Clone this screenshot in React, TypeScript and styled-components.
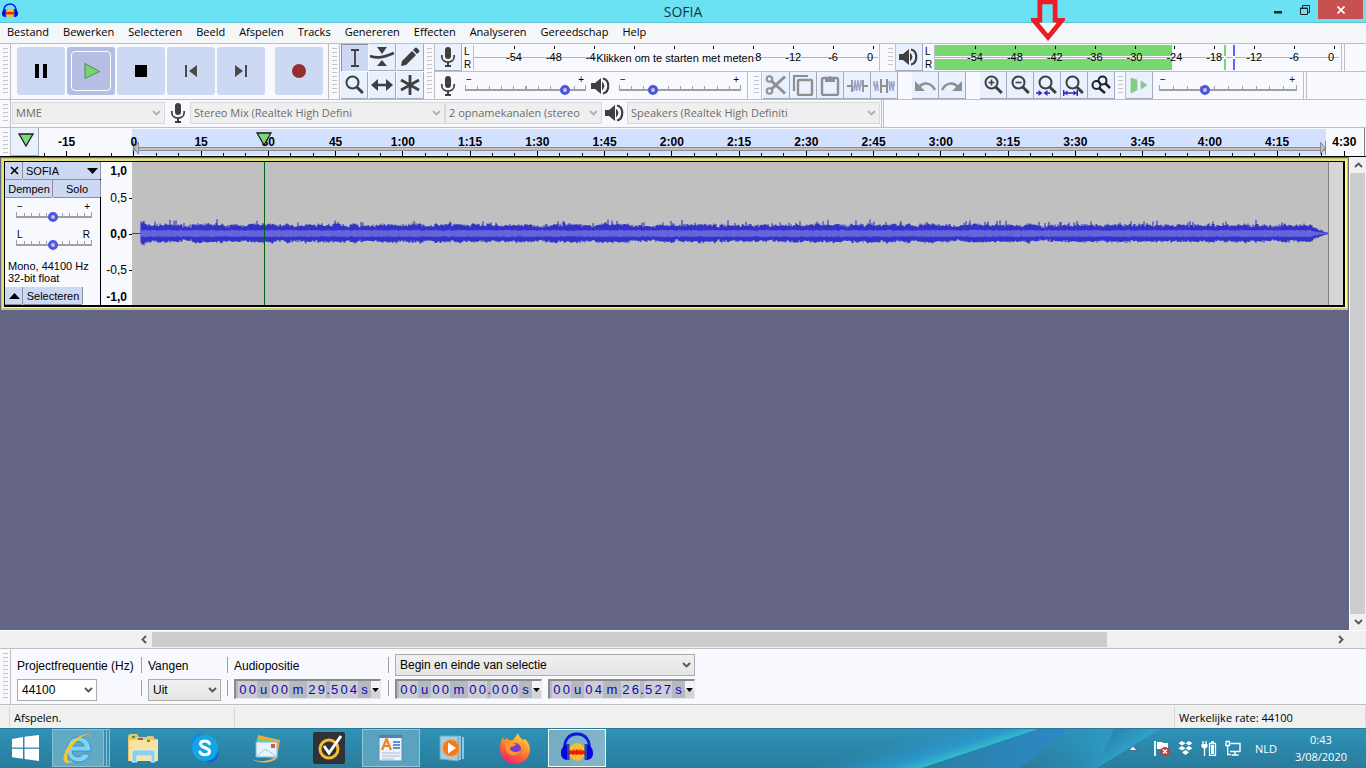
import React from 'react';
import styled, { createGlobalStyle, css } from 'styled-components';

const UI = '"Open Sans", "Noto Sans", sans-serif';
const ARIAL = '"Liberation Sans", Arial, sans-serif';
const PANEL = '#f8f9ff';
const BUTTON = '#cdd9f2';
const LINE = '#bfbfbf';

const GlobalStyle = createGlobalStyle`
  * { box-sizing: border-box; }
  body { margin: 0; background: #646584; color: #000; font-family: ${ARIAL}; font-size: 11px; }
  button, select, input { font: inherit; color: inherit; margin: 0; padding: 0; border: 0; background: none; border-radius: 0; }
  svg { display: block; flex: none; }
`;

const Window = styled.div`
  position: relative;
  display: flex;
  flex-direction: column;
  min-height: 100vh;
  overflow: hidden;
`;

/* ---------- title bar and menu ---------- */

const TitleBar = styled.header`
  display: grid;
  grid-template-columns: 1fr auto 1fr;
  height: 23px;
  background: #6ae2f4;
  border-bottom: 1px solid #5cc4d4;
`;
const TitleIcon = styled.div`
  padding: 3px 2px;
`;
const Title = styled.h1`
  margin: 0;
  font: 400 14px/23px ${UI};
  color: #14363b;
`;
const WindowButtons = styled.div`
  display: flex;
  justify-content: flex-end;
  padding-right: 3px;
`;
const WindowButton = styled.button<{ $close?: boolean }>`
  display: flex;
  align-items: center;
  justify-content: center;
  width: ${p => (p.$close ? 45 : 27)}px;
  height: 19px;
  background: ${p => (p.$close ? '#c75050' : 'none')};
`;
const MenuBar = styled.nav`
  display: flex;
  height: 20px;
  background: #f5f6f7;
`;
const MenuItem = styled.button`
  padding: 0 7px;
  font: 11px/18px ${UI};
  height: 18px;
`;

/* ---------- toolbars ---------- */

const Dock = styled.div`
  display: flex;
  height: 57px;
  background: ${PANEL};
  border-top: 1px solid ${LINE};
  border-bottom: 1px solid ${LINE};
`;
const DockRows = styled.div`
  display: flex;
  flex-direction: column;
  flex: 1;
`;
const DockRow = styled.div`
  display: flex;
  height: 28px;
  & + & { border-top: 1px solid ${LINE}; }
`;
const Bar = styled.div<{ $w?: number; $gap?: number; $pad?: number; $up?: boolean }>`
  display: flex;
  align-items: center;
  flex: none;
  width: ${p => (p.$w ? `${p.$w}px` : 'auto')};
  gap: ${p => p.$gap ?? 0}px;
  padding-left: ${p => p.$pad ?? 0}px;
  padding-bottom: ${p => (p.$up ? 2 : 0)}px;
  border-right: 1px solid ${LINE};
`;
const OpenBar = styled(Bar)`
  border-right: 0;
`;
const Gap = styled.div<{ $w: number }>`
  flex: none;
  width: ${p => p.$w}px;
`;
const GripBox = styled.div`
  flex: none;
  width: 11px;
  padding: 4px 2px 3px 3px;
  border-right: 1px solid ${LINE};
  &::before {
    content: '';
    display: block;
    height: 100%;
    background: repeating-linear-gradient(#c4c4c8 0 1px, transparent 1px 4px);
  }
`;
const TransportButton = styled.button<{ $down?: boolean; $apart?: boolean }>`
  display: flex;
  align-items: center;
  justify-content: center;
  width: 48px;
  height: 48px;
  margin-left: ${p => (p.$apart ? 8 : 0)}px;
  border-radius: 3px;
  background: ${p => (p.$down ? '#b6bfe3' : BUTTON)};
`;
const PressedFrame = styled.span`
  display: flex;
  align-items: center;
  justify-content: center;
  width: 40px;
  height: 40px;
  border: 1px solid #fff;
  border-radius: 4px;
  padding-left: 2px;
`;
const ToolGrid = styled.div`
  display: grid;
  grid-template-columns: repeat(3, 27px);
  grid-auto-rows: 27px;
  gap: 1px;
  padding: 0 0 0 1px;
`;
const ToolButton = styled.button<{ $down?: boolean }>`
  display: flex;
  align-items: center;
  justify-content: center;
  width: 27px;
  height: 27px;
  flex: none;
  background: ${p => (p.$down ? BUTTON : '#e9f0fe')};
  border: solid ${p => (p.$down ? '#8890a8' : '#a4aaba')};
  border-width: ${p => (p.$down ? '1px 0 0 1px' : '0 1px 1px 0')};
`;
const Channels = styled.div`
  display: flex;
  flex-direction: column;
  width: 11px;
  padding-left: 2px;
  font-size: 10px;
  line-height: 13px;
`;
const Scale = styled.div<{ $level?: number }>`
  position: relative;
  display: grid;
  grid-template-columns: repeat(9, 2fr) 1fr;
  width: 400px;
  height: 25px;
  padding-left: 20px;
  border-left: 1px solid ${LINE};
  background:
    linear-gradient(${PANEL}, ${PANEL}) no-repeat 0 11px / 100% 3px,
    linear-gradient(#78d870, #78d870) no-repeat 0 0 / ${p => p.$level ?? 0}% 100%;
`;
const ScaleAxis = styled.div`
  position: absolute;
  left: 0;
  right: -5px;
  top: 12px;
  height: 1px;
  background: #b4b4b4;
`;
const ScaleLabel = styled.span<{ $side?: 'left' | 'right' }>`
  position: relative;
  text-align: ${p => p.$side ?? 'center'};
  padding: 0 ${p => (p.$side ? 12 : 0)}px;
  line-height: 25px;
  &::before {
    content: '';
    position: absolute;
    left: 50%;
    top: 1px;
    width: 1px;
    height: 3px;
    background: #000;
  }
  &:last-of-type { text-align: right; }
  &:last-of-type::before { left: 100%; }
`;
const Peak = styled.i<{ $at: number; $c: string }>`
  position: absolute;
  left: ${p => p.$at}%;
  top: 0;
  width: 2px;
  height: 25px;
  background: linear-gradient(${p => p.$c} 11px, ${PANEL} 11px 14px, ${p => p.$c} 14px);
`;
const MeterHint = styled.button`
  position: absolute;
  left: 122px;
  top: 4px;
  width: 158px;
  height: 18px;
  background: ${PANEL};
  white-space: nowrap;
`;

const SliderBox = styled.label<{ $w: number }>`
  display: flex;
  flex-direction: column;
  flex: none;
  width: ${p => p.$w}px;
  font-size: 10px;
  line-height: 11px;
`;
const SliderEnds = styled.span`
  display: flex;
  justify-content: space-between;
  padding: 0 2px 0 1px;
`;
const Range = styled.input`
  && {
    appearance: none;
    width: 100%;
    height: 12px;
    margin: -2px 0 2px;
    background:
      linear-gradient(#a0a0a0, #a0a0a0) no-repeat 0 6px / 100% 2px,
      repeating-linear-gradient(90deg, #a0a0a0 0 1px, transparent 1px 10%) no-repeat 0 3px / 100% 3px,
      linear-gradient(#a0a0a0, #a0a0a0) no-repeat 0 2px / 1px 4px,
      linear-gradient(#a0a0a0, #a0a0a0) no-repeat 100% 2px / 1px 4px;
  }
  &::-webkit-slider-thumb {
    appearance: none;
    width: 10px;
    height: 10px;
    margin-top: 1px;
    border: 3px solid #4b55e6;
    border-radius: 5px;
    background: #c8c8c8;
  }
`;

const SelectBox = styled.span<{ $w: number; $h?: number; $off?: boolean; $white?: boolean }>`
  position: relative;
  display: block;
  flex: none;
  width: ${p => p.$w}px;
  height: ${p => p.$h ?? 22}px;
  select {
    appearance: none;
    width: 100%;
    height: 100%;
    padding: 0 16px 0 ${p => (p.$off ? 3 : 4)}px;
    border: 1px solid ${p => (p.$off ? '#d9d9d9' : '#acacac')};
    background: ${p => (p.$off ? '#efefef' : p.$white ? '#fff' : 'linear-gradient(#f0f0f0, #e5e5e5)')};
    color: ${p => (p.$off ? '#6d6d6d' : '#000')};
    opacity: 1;
    font: ${p => (p.$off ? `11px ${UI}` : `12px ${ARIAL}`)};
  }
  svg {
    position: absolute;
    right: 4px;
    top: calc(50% - 3px);
    pointer-events: none;
  }
`;
const DeviceBar = styled.div`
  display: flex;
  height: 28px;
  background: ${PANEL};
  border-bottom: 1px solid ${LINE};
`;
const DeviceIcon = styled.span<{ $w: number }>`
  display: flex;
  justify-content: center;
  width: ${p => p.$w}px;
`;

/* ---------- timeline ---------- */

const Timeline = styled.div`
  display: flex;
  height: 29px;
  background: ${PANEL};
  border-bottom: 1px solid #000;
  padding-right: 1px;
`;
const PinButton = styled(ToolButton)`
  width: 28px;
  height: 28px;
  padding: 0 0 4px 3px;
`;
const RulerView = styled.div`
  position: relative;
  flex: 1;
  overflow: hidden;
  border-right: 1px solid #808080;
`;
const RulerSelection = styled.div`
  position: absolute;
  inset: 1px 38px 1px 93px;
  background: #d4e1fe;
`;
const LoopRange = styled.div`
  position: absolute;
  inset: 19px 39px auto 95px;
  height: 4px;
  border: 1px solid #8c8c8c;
  background: #c0c0c0;
`;
const LoopEnd = styled.svg<{ $right?: boolean }>`
  position: absolute;
  top: 13px;
  ${p => (p.$right ? 'right: 38px' : 'left: 94px')};
`;
const RulerCells = styled.div`
  position: relative;
  display: grid;
  grid-template-columns: repeat(20, 1fr);
  height: 28px;
  margin: 0 -14px 0 -6px;
`;
const RulerCell = styled.div`
  display: flex;
  flex-direction: column;
  justify-content: space-between;
  font-weight: bold;
  font-size: 12px;
  line-height: 14px;
  padding-top: 7px;
  text-align: center;
`;
const Ticks = styled.div`
  display: flex;
  justify-content: space-around;
  align-items: flex-end;
  i { width: 1px; height: 3px; background: #000; }
  i:nth-child(2) { height: 5px; }
`;
const PlayHead = styled.svg`
  position: absolute;
  left: 17%;
  margin-left: -8px;
  top: 4px;
`;

/* ---------- tracks ---------- */

const Workspace = styled.main`
  display: flex;
  flex: 1;
`;
const TrackArea = styled.div`
  flex: 1;
  min-width: 0;
  padding: 1px 1px 0 1px;
  background: #646584;
`;
const Track = styled.section`
  border: 2px solid #c8c878;
  border-width: 1px 1px 2px 1px;
`;
const TrackFocus = styled.div`
  border: 1px solid #ffff78;
  border-width: 2px 2px 1px 2px;
  border-color: #e4e478 #ffff78 #ffff78 #e4e478;
`;
const TrackBody = styled.div`
  display: flex;
  height: 146px;
  border: solid #000;
  border-width: 1px 2px 2px 1px;
`;
const TrackPanel = styled.div`
  display: flex;
  flex-direction: column;
  flex: none;
  width: 96px;
  background: ${PANEL};
  border-right: 1px solid #000;
`;
const PanelRow = styled.div`
  display: flex;
  gap: 1px;
  height: 18px;
`;
const PanelButton = styled.button<{ $w?: number }>`
  && {
    display: flex;
    align-items: center;
    justify-content: ${p => (p.$w === 77 ? 'space-between' : 'center')};
    ${p => (p.$w ? `width: ${p.$w}px` : 'flex: 1')};
    height: 17px;
    padding: 0 2px 0 3px;
    background: ${BUTTON};
    box-shadow: 0 1px #8c90a0, 1px 0 #8c90a0;
  }
`;
const PanelSlider = styled.div`
  padding: 3px 11px 0;
  height: 28px;
`;
const TrackInfo = styled.p`
  flex: 1;
  margin: 6px 0 0 3px;
  line-height: 12px;
`;
const Amplitude = styled.div`
  display: grid;
  grid-template-rows: 18px 36px 36px 36px 1fr;
  flex: none;
  width: 31px;
  background: ${PANEL};
  font-size: 12px;
`;
const AmplitudeMark = styled.span<{ $bold?: boolean; $tick?: boolean }>`
  display: flex;
  align-items: center;
  justify-content: flex-end;
  gap: 2px;
  line-height: 14px;
  padding-right: ${p => (p.$tick ? 0 : 5)}px;
  font-weight: ${p => (p.$bold ? 'bold' : 'normal')};
  &::after {
    content: '';
    display: ${p => (p.$tick ? 'block' : 'none')};
    width: 3px;
    height: 1px;
    background: #000;
  }
`;
const WaveView = styled.div`
  position: relative;
  display: flex;
  flex: 1;
  min-width: 0;
  background: #d6d6d6;
`;
const Clip = styled.div`
  flex: 1;
  min-width: 0;
  margin-right: 14px;
  background: #c0c0c0;
  border-right: 1px solid #808080;
  svg { width: 100%; height: 100%; }
`;
const Cursor = styled.div`
  position: absolute;
  left: 10.9%;
  top: 0;
  bottom: 0;
  width: 1px;
  background: #006414;
`;

/* ---------- scroll bars ---------- */

const ScrollButton = styled.button`
  display: flex;
  align-items: center;
  justify-content: center;
  width: 16px;
  height: 16px;
  flex: none;
`;
const VScroll = styled.div`
  display: flex;
  flex-direction: column;
  flex: none;
  width: 17px;
  background: #f0f0f0;
  border-left: 1px solid #fff;
`;
const VThumb = styled.div`
  flex: 1;
  width: 15px;
  background: #cdcdcd;
`;
const HScroll = styled.div`
  display: flex;
  height: 18px;
  padding: 0 17px 0 136px;
  background: #f0f0f0;
  border-top: 1px solid #fff;
`;
const HTrack = styled.div`
  flex: 1;
  padding: 1px 0;
`;
const HThumb = styled.div`
  width: 80.9%;
  height: 15px;
  background: #cdcdcd;
`;

/* ---------- selection bar and status ---------- */

const SelectionBar = styled.div`
  display: flex;
  height: 57px;
  background: ${PANEL};
  border-top: 1px solid ${LINE};
  border-bottom: 1px solid ${LINE};
`;
const Field = styled.div<{ $w?: number }>`
  display: flex;
  flex-direction: column;
  gap: 3px;
  width: ${p => (p.$w ? `${p.$w}px` : 'auto')};
  padding: 5px 0 0 6px;
`;
const FieldLabel = styled.label`
  height: 22px;
  font-size: 12px;
  line-height: 24px;
  white-space: nowrap;
`;
const Divider = styled.div`
  display: flex;
  flex-direction: column;
  gap: 7px;
  padding-top: 8px;
  &::before, &::after { content: ''; width: 1px; height: 16px; background: #a0a0a0; }
`;
const TimeRow = styled.div`
  display: flex;
  gap: 6px;
`;
const TimeBox = styled.div`
  display: flex;
  width: 147px;
  height: 20px;
  padding-left: 2px;
  background: #b4b9c3;
  border: solid;
  border-width: 2px 1px 1px 2px;
  border-color: #8a8a8e #e8e8ec #e8e8ec #8a8a8e;
  color: #0a0ab4;
  font-size: 13px;
  line-height: 17px;
`;
const TimeDigits = styled.span<{ $n: number }>`
  display: flex;
  justify-content: space-around;
  width: ${p => p.$n}px;
  background: #cdcdd3;
`;
const TimeUnit = styled.span<{ $n: number }>`
  width: ${p => p.$n}px;
  text-align: center;
`;
const TimeMenu = styled.button`
  && {
    display: flex;
    align-items: center;
    justify-content: center;
    flex: 1;
    background: linear-gradient(#f4f4f6 50%, #d4d4d8 50%);
  }
`;
const StatusBar = styled.footer`
  display: flex;
  height: 23px;
  padding: 2px 0 1px;
  background: #f0f0f0;
  font: 11px/21px ${UI};
`;
const StatusCell = styled.div<{ $w?: number }>`
  ${p => (p.$w ? `width: ${p.$w}px` : 'flex: 1')};
  padding-left: 4px;
  border-right: 1px solid #d7d7d7;
`;

/* ---------- taskbar ---------- */

const Taskbar = styled.div`
  position: relative;
  display: flex;
  align-items: center;
  height: 40px;
  background: linear-gradient(#2b7796 0 1px, #2f92b8 1px, #287c9c);
`;
const Swoosh = styled.svg`
  position: absolute;
  right: 0;
  top: 1px;
`;
const StartButton = styled.button`
  && {
    width: 50px;
    padding-left: 12px;
  }
`;
const TaskList = styled.div`
  position: relative;
  display: flex;
  flex: 1;
  gap: 4px;
  padding-left: 2px;
`;
const Task = styled.button<{ $state?: 'open' | 'active' | 'stack' }>`
  display: flex;
  align-items: center;
  justify-content: center;
  width: 58px;
  height: 38px;
  ${p => p.$state === 'open' && css`
    background: #5aa3be;
    border: 1px solid #94c4d6;
  `}
  ${p => p.$state === 'active' && css`
    background: linear-gradient(100deg, #74acc2, #84b6ca);
    border: 1px solid #f0f8fb;
  `}
  ${p => p.$state === 'stack' && css`
    background: linear-gradient(90deg, #62a9c3 50px, #8cc1d3 50px 51px, #3a8fae 51px 53px, #8cc1d3 53px 54px, #3a8fae 54px 56px, #8cc1d3 56px 57px, transparent 57px);
    border: 1px solid #8cc1d3;
    border-right: 0;
    padding-right: 8px;
  `}
`;
const Tray = styled.div`
  position: relative;
  display: flex;
  align-items: center;
  gap: 8px;
  color: #fff;
  font: 11px/17px ${UI};
`;
const TrayButton = styled.button`
  display: flex;
`;
const Language = styled.span`
  margin: 0 10px 0 6px;
`;
const Clock = styled.time`
  margin-right: 19px;
  text-align: center;
`;

const RedArrow = styled.svg`
  position: absolute;
  right: 301px;
  top: 0;
`;

/* ---------- icons ---------- */

const DARK = '#3f3f3f';
const Ico = ({ s = 22, h, children, vb = '0 0 22 22' }: { s?: number; h?: number; vb?: string; children: React.ReactNode }) => (
  <svg width={s} height={h ?? s} viewBox={vb} fill="none" aria-hidden="true">{children}</svg>
);
const Chevron = ({ c = '#555' }: { c?: string }) => (
  <Ico s={9} h={6} vb="0 0 9 6"><path d="M1 1l3.500 3.500L8 1" stroke={c} strokeWidth="1.800" /></Ico>
);
const Mic = () => (
  <Ico s={16} h={20} vb="0 0 16 20">
    <rect x="5" y="0" width="6" height="12" rx="3" fill={DARK} />
    <path d="M1.800 8v1.500C1.800 13 4.500 15 8 15s6.200-2 6.200-5.500V8" stroke={DARK} strokeWidth="1.700" />
    <path d="M8 15v4M5 19h6" stroke={DARK} strokeWidth="2" />
  </Ico>
);
const Speaker = () => (
  <Ico s={20} h={18} vb="0 0 20 18">
    <path d="M0 6h4l6-5v16l-6-5H0z" fill={DARK} />
    <path d="M11.500 5.500q3 3.500 0 7z" fill={DARK} stroke={DARK} />
    <path d="M12 1.500c7 1.500 7 13.500 0 15" stroke={DARK} strokeWidth="2.200" />
  </Ico>
);
const Lens = ({ children }: { children?: React.ReactNode }) => (
  <Ico>
    <circle cx="9.500" cy="8.500" r="6" stroke={DARK} strokeWidth="2" />
    <path d="M13.800 13l6 6" stroke={DARK} strokeWidth="3" />
    {children}
  </Ico>
);
const Headphones = ({ s }: { s: number }) => (
  <Ico s={s} vb="0 0 32 32">
    <ellipse cx="16" cy="20" rx="8" ry="9" fill="#f2b04a" />
    <path d="M10 14v11M13 12v15M16 11v17M19 12v15M22 14v11" stroke="#ffd800" strokeWidth="1" />
    <path d="M8 19l2-1 1 1 2-2 1 2 2-2 2 2 1-2 2 2 1-1 2 1v4l-2-1-2 1-2-1-2 1-2-1-2 1-2-1-2 1z" fill="#f51800" />
    <path d="M4 20C2 8 8 2 16 2s14 6 12 18" stroke="#0a18e6" strokeWidth="2.800" />
    <path d="M7 12c-5 1-7 5-7 9s2 7 7 7zM25 12c5 1 7 5 7 9s-2 7-7 7z" fill="#0505e0" />
    <path d="M6 12h2.500v16H6zM23.500 12H26v16h-2.500z" fill="#2f42a8" />
  </Ico>
);
const GreenMark = ({ s = 16 }: { s?: number }) => (
  <Ico s={s} h={14} vb="0 0 16 14"><path d="M1 1h14L8 13z" fill="#7ed87a" stroke="#1c1c1c" strokeWidth="1.300" /></Ico>
);

/* ---------- pieces ---------- */

const Grip = () => <GripBox aria-hidden="true" />;

type Mark = { text: string; side?: 'left' | 'right' };
const marks: Mark[] = ['-54', '-48', '-42', '-36', '-30', '-24', '-18', '-12', '-6', '0'].map(text => ({ text }));
/* the hint button lies over the middle of the recording scale */
const marksAroundHint: Mark[] = [
  { text: '-54' }, { text: '-48' }, { text: '-4', side: 'left' }, { text: '' }, { text: '' }, { text: '' },
  { text: '8', side: 'right' }, { text: '-12' }, { text: '-6' }, { text: '0' },
];
const Meter = ({ labels, level, children }: { labels: Mark[]; level?: number; children?: React.ReactNode }) => (
  <>
    <Channels><span>L</span><span>R</span></Channels>
    <Scale $level={level}>
      <ScaleAxis />
      {labels.map((l, i) => <ScaleLabel key={i} $side={l.side}>{l.text}</ScaleLabel>)}
      {children}
    </Scale>
  </>
);

const Slider = ({ w, v, name, ends = ['−', '+'] }: { w: number; v: number; name: string; ends?: string[] }) => (
  <SliderBox $w={w}>
    <SliderEnds><span>{ends[0]}</span><span>{ends[1]}</span></SliderEnds>
    <Range type="range" min="0" max="100" defaultValue={v} aria-label={name} />
  </SliderBox>
);

const Drop = ({ w, h, value, name, off, white, id }: { w: number; h?: number; value: string; name: string; off?: boolean; white?: boolean; id?: string }) => (
  <SelectBox $w={w} $h={h} $off={off} $white={white}>
    <select id={id} aria-label={name} disabled={off}><option>{value}</option></select>
    <Chevron c={off ? '#b0b0b0' : '#555'} />
  </SelectBox>
);

const Time = ({ u, m, s, ms, name }: { u: string; m: string; s: string; ms: string; name: string }) => {
  const digits = (t: string) => t.split('').map((d, i) => <span key={i}>{d}</span>);
  return (
    <TimeBox role="group" aria-label={name}>
      <TimeDigits $n={19}>{digits(u)}</TimeDigits><TimeUnit $n={13}>u</TimeUnit>
      <TimeDigits $n={19}>{digits(m)}</TimeDigits><TimeUnit $n={18}>m</TimeUnit>
      <TimeDigits $n={19}>{digits(s)}</TimeDigits><TimeUnit $n={4}>.</TimeUnit>
      <TimeDigits $n={28}>{digits(ms)}</TimeDigits><TimeUnit $n={13}>s</TimeUnit>
      <TimeMenu aria-label={`${name} opmaak`}>
        <Ico s={7} h={4} vb="0 0 7 4"><path d="M0 0h7L3.500 4z" fill="#000" /></Ico>
      </TimeMenu>
    </TimeBox>
  );
};

const W = 1196;
const wave = (() => {
  let seed = 7;
  const rnd = () => {
    seed = (seed * 16807) % 2147483647;
    return seed / 2147483647;
  };
  const envelope = (x: number) => {
    if (x < 13) return 1.4;
    if (x > 1180) return Math.max(0.15, (W - x) / 20);
    return 1;
  };
  let outer = '';
  let inner = '';
  let drift = 0;
  for (let x = 9; x < W; x++) {
    const e = envelope(x);
    drift = drift * 0.7 + (rnd() - 0.5) * 1.6;
    const up = (7 + drift + rnd() * 2.5 + (rnd() > 0.93 ? 3.5 : 0)) * e;
    const down = (7 + drift + rnd() * 2) * e;
    outer += `M${x} ${(71.5 - up).toFixed(1)}V${(71.5 + down).toFixed(1)}`;
    const rms = (2.6 + rnd() * 1.2) * Math.min(1, e);
    inner += `M${x} ${(71.5 - rms).toFixed(1)}V${(71.5 + rms).toFixed(1)}`;
  }
  return { outer, inner };
})();

const times = ['-15', '0', '15', '30', '45', '1:00', '1:15', '1:30', '1:45', '2:00', '2:15', '2:30', '2:45', '3:00', '3:15', '3:30', '3:45', '4:00', '4:15', '4:30'];
const menus = ['Bestand', 'Bewerken', 'Selecteren', 'Beeld', 'Afspelen', 'Tracks', 'Genereren', 'Effecten', 'Analyseren', 'Gereedschap', 'Help'];
const GREY = '#8f8f8f';
const BLUE = '#2c2cc0';

const Transport = () => (
  <Bar $pad={6} $gap={2} $w={318} $up>
    <TransportButton aria-label="Pauze"><Ico s={14} vb="0 0 14 14"><path d="M1 0h4v14H1zM9 0h4v14H9z" fill="#000" /></Ico></TransportButton>
    <TransportButton $down aria-label="Afspelen">
      <PressedFrame><Ico s={16} vb="0 0 16 16"><path d="M1 0.500L15.500 8.500 1 15.500z" fill="#74d66c" stroke="#4d8a55" /></Ico></PressedFrame>
    </TransportButton>
    <TransportButton aria-label="Stop"><Ico s={12} vb="0 0 12 12"><path d="M0 0h12v12H0z" fill="#000" /></Ico></TransportButton>
    <TransportButton aria-label="Naar begin"><Ico s={14} vb="0 0 14 14"><path d="M1 1h2v12H1zM13 1v12L5 7z" fill="#4a4a4a" /></Ico></TransportButton>
    <TransportButton aria-label="Naar einde"><Ico s={14} vb="0 0 14 14"><path d="M11 1h2v12h-2zM1 1v12l8-6z" fill="#4a4a4a" /></Ico></TransportButton>
    <TransportButton $apart aria-label="Opnemen"><Ico s={14} vb="0 0 14 14"><circle cx="7" cy="7" r="7" fill="#942f2f" /></Ico></TransportButton>
  </Bar>
);

const Tools = () => (
  <ToolGrid>
    <ToolButton $down aria-label="Selectie"><Ico><path d="M7 3h3q1 0 1 1 0-1 1-1h3M7 19h3q1 0 1-1 0 1 1 1h3M11 3v16" stroke={DARK} strokeWidth="1.800" /></Ico></ToolButton>
    <ToolButton aria-label="Envelop">
      <Ico s={24} h={22} vb="0 0 24 22"><path d="M0 10c8 3 14 1 24-3" stroke={DARK} strokeWidth="2.800" /><path d="M7 1h10l-5 7zM7 20h10l-5-6z" fill={DARK} /></Ico>
    </ToolButton>
    <ToolButton aria-label="Tekenen"><Ico><path d="M2 20l1-5L13 5l4 4L7 19zM14 4l2-2q1-1 2 0l2 2q1 1 0 2l-2 2z" fill={DARK} /></Ico></ToolButton>
    <ToolButton aria-label="Zoomen"><Lens /></ToolButton>
    <ToolButton aria-label="Tijd verschuiven"><Ico><path d="M4 11h14" stroke={DARK} strokeWidth="2.500" /><path d="M0 11l7-6v12zM22 11l-7-6v12z" fill={DARK} /></Ico></ToolButton>
    <ToolButton aria-label="Multi-gereedschap"><Ico><path d="M11 1v20M2 6l18 10M2 16L20 6" stroke={DARK} strokeWidth="2.800" /></Ico></ToolButton>
  </ToolGrid>
);

const EditButtons = () => (
  <>
    <ToolButton aria-label="Knippen">
      <Ico><circle cx="4.500" cy="5" r="2.800" stroke={GREY} strokeWidth="2" /><circle cx="4.500" cy="17" r="2.800" stroke={GREY} strokeWidth="2" /><path d="M6.500 7L20 19.500M6.500 15L20 2.500" stroke={GREY} strokeWidth="3" /></Ico>
    </ToolButton>
    <ToolButton aria-label="Kopiëren">
      <Ico><path d="M2 17V2h14" stroke={GREY} strokeWidth="2.200" /><rect x="6" y="6" width="14" height="15" rx="1" stroke={GREY} strokeWidth="2.400" /></Ico>
    </ToolButton>
    <ToolButton aria-label="Plakken">
      <Ico><rect x="3" y="4" width="16" height="17" rx="1.500" stroke={GREY} strokeWidth="2.400" /><path d="M6 4h3q2-4 4 0h3v4H6z" fill={GREY} /></Ico>
    </ToolButton>
    <ToolButton aria-label="Bijsnijden">
      <Ico><path d="M1 12h5M17 12h5" stroke={GREY} strokeWidth="2" /><path d="M6 6v12M17 6v12" stroke={GREY} strokeWidth="1.800" /><path d="M8 12v5l1-11 1.500 11L12 6l1.500 11L15 6v6" stroke="#9aa2cc" strokeWidth="1.400" /></Ico>
    </ToolButton>
    <ToolButton aria-label="Stilte">
      <Ico><path d="M8 12h6" stroke={GREY} strokeWidth="2" /><path d="M8 5v14M14 5v14" stroke={GREY} strokeWidth="2" /><path d="M1 12V7l1.500 10L4 7l1.500 10M16 7l1 10 1.500-10L20 17l1-10v5" stroke="#9aa2cc" strokeWidth="1.400" /></Ico>
    </ToolButton>
  </>
);

export default function App() {
  return (
    <Window>
      <GlobalStyle />
      <TitleBar>
        <TitleIcon><Headphones s={16} /></TitleIcon>
        <Title>SOFIA</Title>
        <WindowButtons>
          <WindowButton aria-label="Minimaliseren"><Ico s={10} vb="0 0 10 10"><path d="M1 6h8v2.500H1z" fill="#222" /></Ico></WindowButton>
          <WindowButton aria-label="Herstellen"><Ico s={10} vb="0 0 10 10"><path d="M2.500 2.500V.5h7v7h-2" stroke="#222" /><path d="M.5 3h7v6.500h-7zM.5 3.500h7" stroke="#222" /></Ico></WindowButton>
          <WindowButton $close aria-label="Sluiten"><Ico s={8} vb="0 0 8 8"><path d="M.5.5l7 7M7.500.5l-7 7" stroke="#fff" strokeWidth="1.700" /></Ico></WindowButton>
        </WindowButtons>
      </TitleBar>
      <MenuBar>{menus.map(m => <MenuItem key={m}>{m}</MenuItem>)}</MenuBar>

      <Dock>
        <Grip />
        <Transport />
        <Grip />
        <Tools />
        <Grip />
        <DockRows>
          <DockRow>
            <Bar $w={445}>
              <ToolButton aria-label="Opnamemeter"><Mic /></ToolButton>
              <Meter labels={marksAroundHint}><MeterHint>Klikken om te starten met meten</MeterHint></Meter>
            </Bar>
            <Gap $w={5} />
            <Grip />
            <Bar $w={446}>
              <ToolButton aria-label="Afspeelmeter"><Speaker /></ToolButton>
              <Meter labels={marks} level={59.5}>
                <Peak $at={72.4} $c="#78d870" />
                <Peak $at={74.6} $c="#6464f0" />
              </Meter>
            </Bar>
            <OpenBar $w={2} />
            <Bar $w={1} />
          </DockRow>
          <DockRow>
            <Bar $w={313} $pad={5}>
              <Mic /><Gap $w={9} />
              <Slider w={121} v={86} name="Opnamevolume" />
              <Gap $w={5} /><Speaker /><Gap $w={8} />
              <Slider w={122} v={26} name="Afspeelvolume" />
            </Bar>
            <Gap $w={3} />
            <Grip />
            <OpenBar $pad={1}>
              <EditButtons />
              <Gap $w={14} />
              <ToolButton aria-label="Ongedaan maken"><Ico><path d="M1 7v10h10z" fill={GREY} /><path d="M5 13c4-5 12-5 16 3" stroke={GREY} strokeWidth="2.500" /></Ico></ToolButton>
              <ToolButton aria-label="Opnieuw"><Ico><path d="M21 7v10H11z" fill={GREY} /><path d="M17 13c-4-5-12-5-16 3" stroke={GREY} strokeWidth="2.500" /></Ico></ToolButton>
              <Gap $w={14} />
              <ToolButton aria-label="Inzoomen"><Lens><path d="M9.500 5.500v6M6.500 8.500h6" stroke={DARK} strokeWidth="1.600" /></Lens></ToolButton>
              <ToolButton aria-label="Uitzoomen"><Lens><path d="M6.500 8.500h6" stroke={DARK} strokeWidth="1.600" /></Lens></ToolButton>
              <ToolButton aria-label="Selectie passend maken"><Lens><path d="M0 19h5M9 19h5" stroke={BLUE} strokeWidth="1.500" /><path d="M2.500 16l4 3-4 3zM11.500 16l-4 3 4 3z" fill={BLUE} /></Lens></ToolButton>
              <ToolButton aria-label="Project passend maken"><Lens><path d="M.7 16v6M14.300 16v6M1 19h13" stroke={BLUE} strokeWidth="1.500" /><path d="M4.500 16.500L1 19l3.500 2.500zM10.500 16.500L14 19l-3.500 2.500z" fill={BLUE} /></Lens></ToolButton>
              <ToolButton aria-label="Zoom schakelen">
                <Ico><circle cx="12.500" cy="6.500" r="4" stroke="#222" strokeWidth="2" /><circle cx="6.500" cy="11" r="4" stroke="#222" strokeWidth="2" /><path d="M15 9l5 5M9 14l6 5" stroke="#222" strokeWidth="2.500" /></Ico>
              </ToolButton>
            </OpenBar>
            <Grip />
            <Bar $w={178}>
              <ToolButton aria-label="Afspelen op snelheid">
                <Ico><path d="M3 4l6 2v10l-6 3zM13 7l6 4-6 4z" fill="#7fd07b" stroke="#9db8a8" strokeWidth="0.800" /></Ico>
              </ToolButton>
              <Gap $w={6} />
              <Slider w={138} v={32} name="Afspeelsnelheid" />
            </Bar>
            <OpenBar $w={2} />
            <Bar $w={1} />
          </DockRow>
        </DockRows>
      </Dock>

      <DeviceBar>
        <Grip />
        <Bar $pad={1} $w={871} $up>
          <Drop w={153} value="MME" name="Audiohost" off />
          <DeviceIcon $w={25}><Mic /></DeviceIcon>
          <Drop w={255} value="Stereo Mix (Realtek High Defini" name="Opnameapparaat" off />
          <Drop w={157} value="2 opnamekanalen (stereo" name="Opnamekanalen" off />
          <DeviceIcon $w={25}><Speaker /></DeviceIcon>
          <Drop w={253} value="Speakers (Realtek High Definiti" name="Afspeelapparaat" off />
        </Bar>
        <Bar $w={2} />
      </DeviceBar>

      <Timeline>
        <Grip />
        <PinButton aria-label="Afspeelkop vastzetten"><GreenMark /></PinButton>
        <RulerView>
          <RulerSelection />
          <LoopRange />
          <LoopEnd width="6" height="14" viewBox="0 0 6 14"><path d="M.5 0v14M5.500 1v12L1 7z" fill="#c0c0c0" stroke="#8c8c8c" /></LoopEnd>
          <LoopEnd $right width="6" height="14" viewBox="0 0 6 14"><path d="M5.500 0v14M.5 1v12L5 7z" fill="#c0c0c0" stroke="#8c8c8c" /></LoopEnd>
          <RulerCells>
            {times.map(t => <RulerCell key={t}><span>{t}</span><Ticks><i /><i /><i /></Ticks></RulerCell>)}
          </RulerCells>
          <PlayHead width="16" height="14" viewBox="0 0 16 14"><path d="M1 1h14L8 13z" fill="#7ed87a" stroke="#1c1c1c" strokeWidth="1.300" /></PlayHead>
        </RulerView>
      </Timeline>

      <Workspace>
        <TrackArea>
          <Track>
            <TrackFocus>
              <TrackBody>
                <TrackPanel>
                  <PanelRow>
                    <PanelButton $w={17} aria-label="Track sluiten"><Ico s={9} vb="0 0 9 9"><path d="M1 1l7 7M8 1L1 8" stroke="#000" strokeWidth="1.600" /></Ico></PanelButton>
                    <PanelButton $w={77}>SOFIA<Ico s={11} h={6} vb="0 0 11 6"><path d="M0 0h11L5.500 6z" fill="#000" /></Ico></PanelButton>
                  </PanelRow>
                  <PanelRow>
                    <PanelButton $w={47}>Dempen</PanelButton>
                    <PanelButton>Solo</PanelButton>
                  </PanelRow>
                  <PanelSlider><Slider w={76} v={49} name="Versterking" /></PanelSlider>
                  <PanelSlider><Slider w={76} v={49} name="Balans" ends={['L', 'R']} /></PanelSlider>
                  <TrackInfo>Mono, 44100 Hz<br />32-bit float</TrackInfo>
                  <PanelRow>
                    <PanelButton $w={17} aria-label="Inklappen"><Ico s={11} h={6} vb="0 0 11 6"><path d="M0 6h11L5.500 0z" fill="#000" /></Ico></PanelButton>
                    <PanelButton $w={59}>Selecteren</PanelButton>
                  </PanelRow>
                </TrackPanel>
                <Amplitude>
                  <AmplitudeMark $bold>1,0</AmplitudeMark>
                  <AmplitudeMark $tick>0,5</AmplitudeMark>
                  <AmplitudeMark $tick $bold>0,0</AmplitudeMark>
                  <AmplitudeMark $tick>-0,5</AmplitudeMark>
                  <AmplitudeMark $bold>-1,0</AmplitudeMark>
                </Amplitude>
                <WaveView>
                  <Clip>
                    <svg viewBox={`0 0 ${W} 143`} preserveAspectRatio="none" role="img" aria-label="Golfvorm">
                      <path d={`M0 71.500H${W}`} stroke="#3232c8" />
                      <path d={wave.outer} stroke="#3232c8" strokeWidth="1.100" />
                      <path d={wave.inner} stroke="#6464dc" strokeWidth="1.100" />
                    </svg>
                  </Clip>
                  <Cursor />
                </WaveView>
              </TrackBody>
            </TrackFocus>
          </Track>
        </TrackArea>
        <VScroll>
          <ScrollButton aria-label="Omhoog"><Ico s={9} h={6} vb="0 0 9 6"><path d="M1 5l3.500-3.500L8 5" stroke="#555" strokeWidth="1.800" /></Ico></ScrollButton>
          <VThumb />
          <ScrollButton aria-label="Omlaag"><Chevron /></ScrollButton>
        </VScroll>
      </Workspace>
      <HScroll>
        <ScrollButton aria-label="Links"><Ico s={6} h={9} vb="0 0 6 9"><path d="M5 1L1.500 4.500 5 8" stroke="#555" strokeWidth="1.800" /></Ico></ScrollButton>
        <HTrack><HThumb /></HTrack>
        <ScrollButton aria-label="Rechts"><Ico s={6} h={9} vb="0 0 6 9"><path d="M1 1l3.500 3.500L1 8" stroke="#555" strokeWidth="1.800" /></Ico></ScrollButton>
      </HScroll>

      <SelectionBar>
        <Grip />
        <Field $w={130}>
          <FieldLabel htmlFor="rate">Projectfrequentie (Hz)</FieldLabel>
          <Drop id="rate" w={80} value="44100" name="Projectfrequentie (Hz)" white />
        </Field>
        <Divider />
        <Field $w={85}>
          <FieldLabel htmlFor="snap">Vangen</FieldLabel>
          <Drop id="snap" w={73} value="Uit" name="Vangen" />
        </Field>
        <Divider />
        <Field $w={160}>
          <FieldLabel as="span">Audiopositie</FieldLabel>
          <Time name="Audiopositie" u="00" m="00" s="29" ms="504" />
        </Field>
        <Divider />
        <Field>
          <Drop w={300} value="Begin en einde van selectie" name="Selectieweergave" />
          <TimeRow>
            <Time name="Begin" u="00" m="00" s="00" ms="000" />
            <Time name="Einde" u="00" m="04" s="26" ms="527" />
          </TimeRow>
        </Field>
      </SelectionBar>

      <StatusBar>
        <StatusCell $w={10} />
        <StatusCell $w={225}>Afspelen.</StatusCell>
        <StatusCell />
        <StatusCell $w={191}>Werkelijke rate: 44100</StatusCell>
      </StatusBar>

      <Taskbar>
        <Swoosh width="560" height="39" viewBox="-80 0 560 39" aria-hidden="true">
          <defs>
            <linearGradient id="ray" gradientUnits="userSpaceOnUse" x1="94" y1="19.500" x2="83" y2="-14">
              <stop offset="0" stopColor="#34bcc8" /><stop offset="0.250" stopColor="#2c98cc" /><stop offset="1" stopColor="#2c8fc0" stopOpacity="0" />
            </linearGradient>
            <linearGradient id="deep" x1="0" x2="1"><stop offset="0" stopColor="#2a7ea2" /><stop offset="0.500" stopColor="#2a84b4" /><stop offset="1" stopColor="#2c88c8" /></linearGradient>
            <linearGradient id="edge" x1="0" x2="1"><stop offset="0" stopColor="#2a84aa" stopOpacity="0" /><stop offset="1" stopColor="#2c9cc8" /></linearGradient>
            <linearGradient id="glow" gradientUnits="userSpaceOnUse" x1="243" y1="19" x2="228" y2="0"><stop offset="0" stopColor="#2ea0c8" /><stop offset="1" stopColor="#2a84aa" /></linearGradient>
          </defs>
          <path d="M-80 39V0h232L36 39z" fill="url(#ray)" />
          <path d="M36 39L152 0h30L134 39z" fill="url(#deep)" />
          <path d="M134 39L182 0h46l-17 39z" fill="url(#edge)" />
          <path d="M211 39l17-39h46z" fill="url(#glow)" />
        </Swoosh>
        <StartButton aria-label="Start">
          <Ico s={27} h={26} vb="0 0 27 26"><path d="M0 4l11-2v10.500H0zM12.500 1.800L27 0v12.500H12.500zM0 13.800h11v10L0 22.300zM12.500 13.800H27V26l-14.500-2z" fill="#fff" /></Ico>
        </StartButton>
        <TaskList>
          <Task $state="stack" aria-label="Internet Explorer">
            <Ico s={32} vb="0 0 32 32">
              <path d="M29 19H10c0 6 8 8 11 3h7c-2 5-6 8-11 8C9 30 5 24 5 17S10 5 17 5s12 5 12 14zM22 14c-1-6-11-6-12 0z" fill="#7fd4f6" stroke="#2d86c0" strokeWidth="0.800" fillRule="evenodd" />
              <path d="M29 6C30-1 16 2 8 12S0 31 5 31c2 0 4-1 6-2-3 0-6 1-6-3C5 18 20 1 27 3q2 .6 2 3z" fill="#f7c52c" />
            </Ico>
          </Task>
          <Task aria-label="Verkenner">
            <Ico s={32} vb="0 0 32 32">
              <path d="M1 5q0-3 3-3h6l2 3h8V4h6l2 3h3v22H1z" fill="#e9c66b" />
              <path d="M2 8h29v21H2z" fill="#f8e3a0" />
              <path d="M5 4h3v2H5zM11 6h3v2h-3zM20 8h3v2h-3z" fill="#3c9a48" /><path d="M12 6h4v2h-4z" fill="#d8402c" />
              <path d="M5 30V20q0-2 2-2h19q2 0 2 2v10h-4v-6H10v6z" fill="#8ccfe8" stroke="#d4f0fa" />
            </Ico>
          </Task>
          <Task aria-label="Skype">
            <Ico s={30} vb="0 0 30 30">
              <circle cx="10" cy="9" r="8.500" fill="#1788d8" /><circle cx="20" cy="21" r="8.500" fill="#0a6cc8" /><circle cx="15" cy="15" r="13" fill="#12a5e8" />
              <path d="M19.500 10.500C18 7 10.500 7 10.500 11c0 4.500 9 3 9 7.500 0 4-8 4.500-9.500.5" stroke="#fff" strokeWidth="3" strokeLinecap="round" />
            </Ico>
          </Task>
          <Task aria-label="Mail">
            <Ico s={32} vb="0 0 32 32">
              <path d="M7 3l22 5-3 18L5 20z" fill="#f0a840" /><path d="M6 6l21 3-2 18-20-4z" fill="#8cc870" />
              <path d="M5 10h21v15H5z" fill="#e8f4fc" stroke="#7cb4dc" /><path d="M20 12h4v4h-4z" fill="#d85838" /><path d="M5 25l9-8 12 8" stroke="#a0c8e4" />
              <path d="M1 27c8 4 18 2 26-3-2 7-18 9-26 3z" fill="#f6b04c" />
            </Ico>
          </Task>
          <Task aria-label="Norton">
            <Ico s={32} vb="0 0 32 32">
              <rect width="32" height="32" rx="2" fill="#2f3338" /><circle cx="16" cy="17" r="9" stroke="#f5bc2c" strokeWidth="3" />
              <path d="M11 14l5 7L28 4" stroke="#fff" strokeWidth="3" />
            </Ico>
          </Task>
          <Task $state="open" aria-label="WordPad">
            <Ico s={32} vb="0 0 32 32">
              <path d="M4 3h23v26H4z" fill="#eaf4fc" stroke="#5a90bc" /><path d="M4 3h23v3H4z" fill="#4a84b4" />
              <path d="M7 18l4.500-11L16 18M9 14h5" stroke="#f08424" strokeWidth="2.200" /><path d="M18 10h7M18 13h7M18 16h7" stroke="#3c6cc8" strokeWidth="1.500" /><path d="M7 21h18M7 24h18M7 27h12" stroke="#a8bccc" />
            </Ico>
          </Task>
          <Task aria-label="Mediaspeler">
            <Ico s={30} vb="0 0 30 30">
              <path d="M20 3h3v24h-3zM24 4h2v22h-2z" fill="#8cc8e4" /><path d="M2 3h18v25L2 26z" fill="#a0d0e8" stroke="#68a8c8" />
              <circle cx="13" cy="15" r="9" fill="#f07c1c" /><circle cx="13" cy="15" r="8.500" stroke="#f8b070" /><path d="M10 9.500l8 5.500-8 5.500z" fill="#fff" />
            </Ico>
          </Task>
          <Task aria-label="Firefox">
            <Ico s={32} vb="0 0 32 32">
              <defs><linearGradient id="fox" x1="0.800" y1="0" x2="0.300" y2="1"><stop offset="0" stopColor="#ffe645" /><stop offset="0.450" stopColor="#ff8a26" /><stop offset="1" stopColor="#f0206c" /></linearGradient></defs>
              <path d="M1 17c0-5 1-9 3-12l1 3 3-2c1 2 3 3 6 2 1-2 3-3 5-7 1 4 3 5 5 7l2-1c3 3 5 6 5 10 0 9-7 15-15 15S1 26 1 17z" fill="url(#fox)" />
              <circle cx="16" cy="17" r="6" fill="#7a3cd0" /><path d="M6 11c5-2 8 0 11 1-1 3-5 2-6 4 0 4 7 6 11 2-1 6-13 8-15-1z" fill="#ff9a2c" />
            </Ico>
          </Task>
          <Task $state="active" aria-label="Audacity"><Headphones s={32} /></Task>
        </TaskList>
        <Tray>
          <TrayButton aria-label="Verborgen pictogrammen"><Ico s={10} h={6} vb="0 0 10 6"><path d="M1 5.500h8L5 1z" fill="#fff" stroke="#1d4f66" strokeWidth="0.700" /></Ico></TrayButton>
          <Gap $w={0} />
          <TrayButton aria-label="Onderhoudscentrum">
            <Ico s={16} vb="0 0 16 16"><path d="M1 1v15" stroke="#fff" strokeWidth="1.800" /><path d="M3 2h5l1 1h5v7H8L7 9H3z" fill="#fff" /><circle cx="11" cy="11.500" r="4.500" fill="#d83030" /><path d="M9 9.500l4 4M13 9.500l-4 4" stroke="#fff" strokeWidth="1.400" /></Ico>
          </TrayButton>
          <TrayButton aria-label="Dropbox">
            <Ico s={15} h={14} vb="0 0 15 14"><path d="M4 0l3.500 2.300L4 4.600.5 2.300zM11 0l3.500 2.300L11 4.600 7.500 2.300zM4 5l3.500 2.300L4 9.600.5 7.300zM11 5l3.500 2.300L11 9.600 7.500 7.300zM7.500 9l3.500 2.300L7.500 14 4 11.300z" fill="#fff" /></Ico>
          </TrayButton>
          <TrayButton aria-label="Batterij">
            <Ico s={16} vb="0 0 16 16"><path d="M2 1v3M5 1v3M3.500 8v8" stroke="#fff" strokeWidth="1.300" /><path d="M.5 4h6v3q-3 3-6 0z" fill="#fff" /><path d="M8.500 3.500h6v12h-6zM10 2h3" stroke="#fff" strokeWidth="1.300" /><path d="M10 5h3v9h-3z" fill="#fff" /></Ico>
          </TrayButton>
          <TrayButton aria-label="Netwerk">
            <Ico s={16} vb="0 0 16 16"><path d="M5.500 3.500h9.500v8H5M10 12v3M6.500 15h7" stroke="#fff" strokeWidth="1.400" /><path d="M1 1.500h3.500v4H1zM2.700 6v8.500h3" stroke="#fff" strokeWidth="1.300" /></Ico>
          </TrayButton>
          <Language>NLD</Language>
          <Clock>0:43<br />3/08/2020</Clock>
        </Tray>
      </Taskbar>

      <RedArrow width="34" height="41" viewBox="0 0 34 41" aria-hidden="true">
        <path d="M9 2h15v18.500h6.500L17 37 3 20.500h6z" fill="none" stroke="#ee1c24" strokeWidth="5" />
        <path d="M11.500 4.500h10v18h4L17 33 8.500 22.500h3z" fill="#6ae2f4" />
        <path d="M8.500 23h17L17 33.500z" fill="#f5f6f7" />
      </RedArrow>
    </Window>
  );
}
